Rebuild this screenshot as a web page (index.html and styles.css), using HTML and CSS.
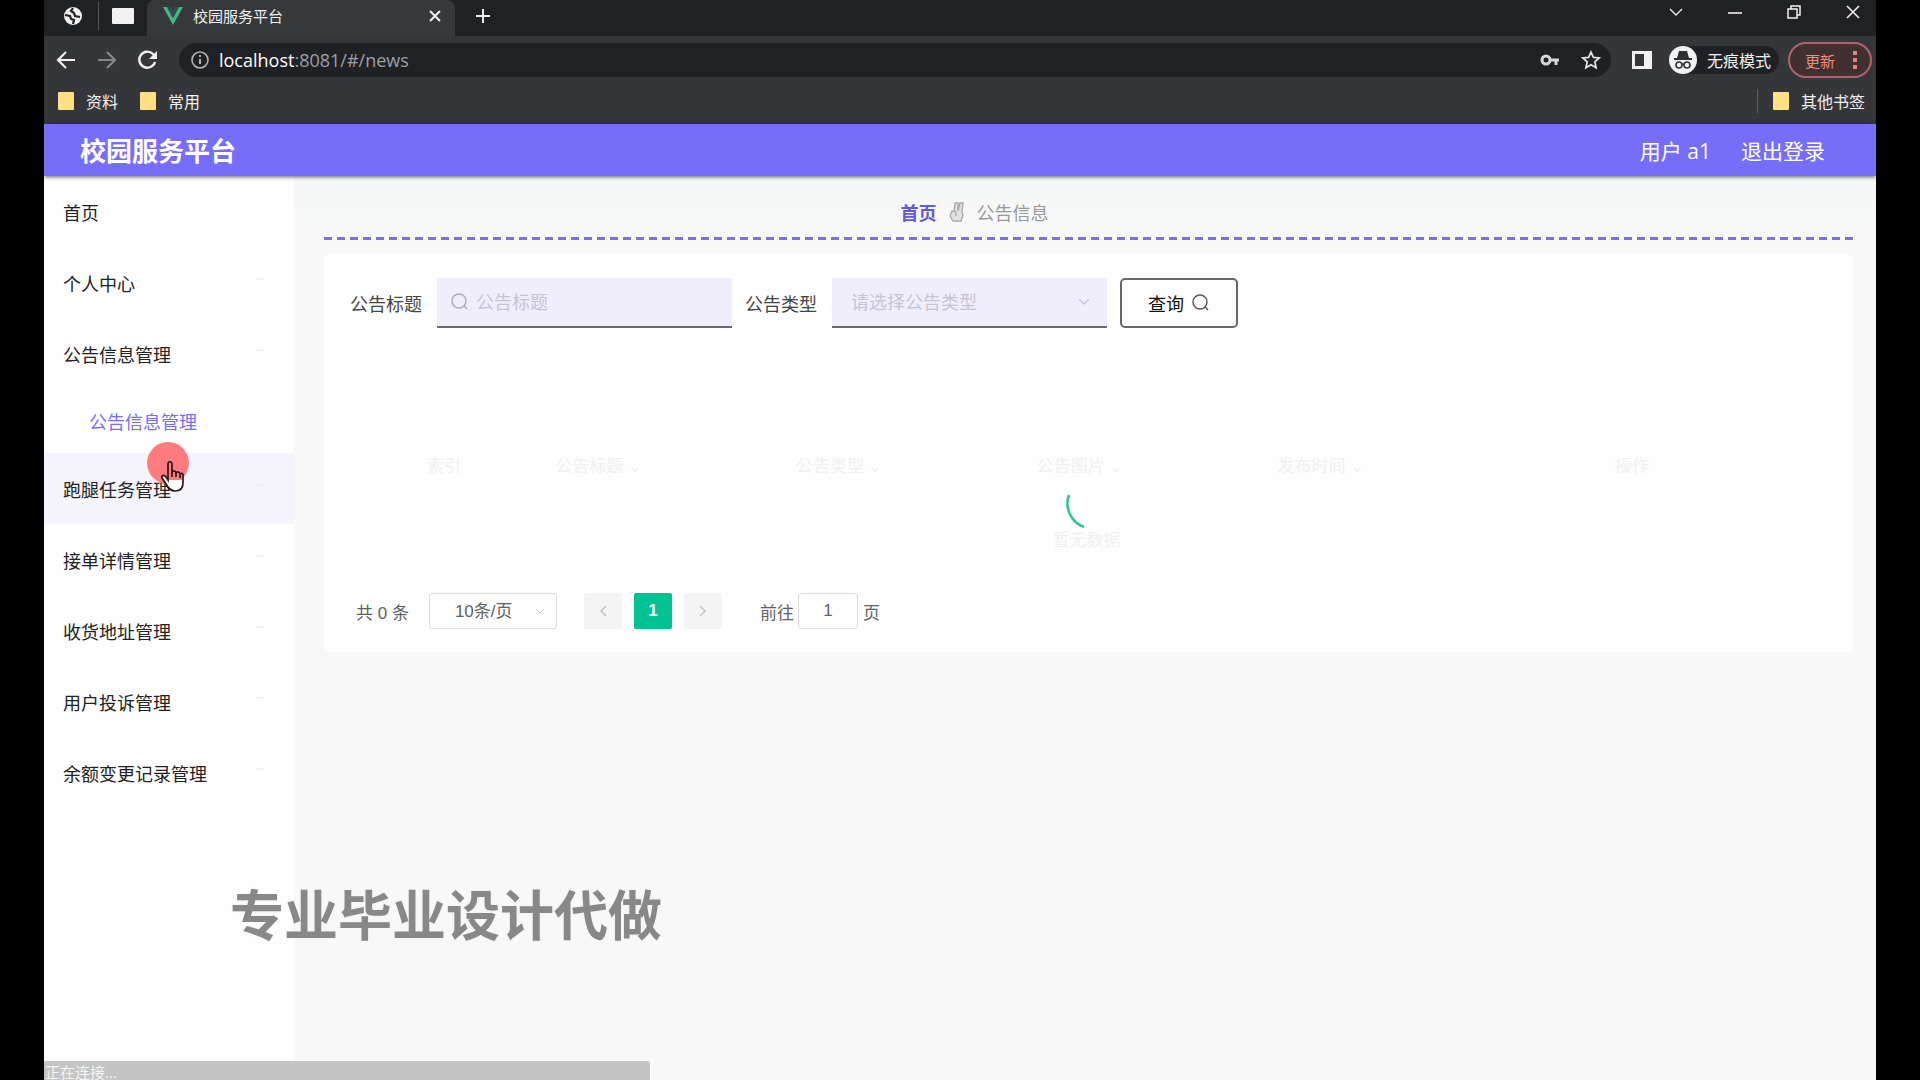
FILE: index.html
```html
<!DOCTYPE html>
<html lang="zh-CN">
<head>
  <meta charset="UTF-8">
  <meta name="viewport" content="width=device-width, initial-scale=1.0">
  <title>校园服务平台</title>
  <link rel="stylesheet" href="styles.css">
</head>
<body>
  <div class="screen">
    <!-- Browser frame -->
    <div class="browser">
      <div class="tab-strip">
        <div class="pinned">
          <svg width="20" height="20" viewBox="0 0 20 20"><circle cx="10" cy="10" r="9" fill="#f1f1f1"/><path d="M2 9l5 1 1 3 3 1-1 4M10 2L8 5l3 2 1 3 5 1" fill="none" stroke="#202124" stroke-width="2.200"/></svg>
        </div>
        <div class="pinned pinned-last">
          <svg width="22" height="16" viewBox="0 0 22 16"><rect width="22" height="16" rx="1" fill="#f1f1f1"/></svg>
        </div>
        <div class="tab">
          <svg width="20" height="18" viewBox="0 0 20 18"><path d="M0 0h4l6 11 6-11h4L10 18z" fill="#41b883"/><path d="M4 0h4l2 4 2-4h4l-6 11z" fill="#34495e"/></svg>
          <span class="tab-title">校园服务平台</span>
          <button class="chrome-btn" aria-label="关闭标签页"><svg width="12" height="12" viewBox="0 0 12 12"><path d="M1 1l10 10M11 1L1 11" stroke="#f1f1f1" stroke-width="2"/></svg></button>
        </div>
        <button class="chrome-btn new-tab" aria-label="新标签页"><svg width="16" height="16" viewBox="0 0 16 16"><path d="M8 1v14M1 8h14" stroke="#e8eaed" stroke-width="2"/></svg></button>
        <div class="window-controls">
          <button class="chrome-btn" aria-label="搜索标签页"><svg width="14" height="14" viewBox="0 0 14 14"><path d="M1 4l6 6 6-6" fill="none" stroke="#e8eaed" stroke-width="1.4"/></svg></button>
          <button class="chrome-btn" aria-label="最小化"><svg width="14" height="14" viewBox="0 0 14 14"><path d="M0 8h14" stroke="#f1f1f1" stroke-width="1.6"/></svg></button>
          <button class="chrome-btn" aria-label="还原"><svg width="14" height="14" viewBox="0 0 14 14"><path d="M1 4h9v9H1zM4 4V1h9v9h-3" fill="none" stroke="#f1f1f1" stroke-width="1.5"/></svg></button>
          <button class="chrome-btn" aria-label="关闭"><svg width="14" height="14" viewBox="0 0 14 14"><path d="M1 1l12 12M13 1L1 13" stroke="#f1f1f1" stroke-width="1.6"/></svg></button>
        </div>
      </div>

      <div class="toolbar">
        <button class="chrome-btn" aria-label="后退"><svg width="20" height="20" viewBox="0 0 20 20"><path d="M19 10H2M10 2l-8 8 8 8" fill="none" stroke="#f1f1f1" stroke-width="2.2"/></svg></button>
        <button class="chrome-btn" aria-label="前进"><svg width="20" height="20" viewBox="0 0 20 20"><path d="M1 10h17M10 2l8 8-8 8" fill="none" stroke="#85878a" stroke-width="2.2"/></svg></button>
        <button class="chrome-btn" aria-label="重新加载"><svg width="20" height="20" viewBox="0 0 20 20"><path d="M17 12a8 8 0 1 1-2-8l2 2" fill="none" stroke="#f1f1f1" stroke-width="2.4"/><path d="M19 1v8h-8z" fill="#f1f1f1"/></svg></button>
        <div class="address-bar">
          <svg width="18" height="18" viewBox="0 0 18 18"><circle cx="9" cy="9" r="8" fill="none" stroke="#b0b3b7" stroke-width="1.6"/><path d="M9 8v5M9 4v2" stroke="#b0b3b7" stroke-width="2"/></svg>
          <span class="url"><b>localhost</b>:8081/#/news</span>
          <svg width="20" height="14" viewBox="0 0 20 14"><circle cx="6" cy="7" r="4" fill="none" stroke="#d5d7da" stroke-width="3"/><path d="M10 7h9M16 7v5" stroke="#d5d7da" stroke-width="3"/></svg>
          <svg width="20" height="20" viewBox="0 0 20 20"><path d="M10 2l2.400 5.400 5.800.6-4.400 3.900 1.300 5.800L10 14.700l-5.100 3 1.300-5.800L1.800 8l5.800-.6z" fill="none" stroke="#e2e4e6" stroke-width="1.700"/></svg>
        </div>
        <svg width="20" height="18" viewBox="0 0 20 18"><path d="M1.500 1.500h17v15h-17z" fill="none" stroke="#f1f1f1" stroke-width="3"/><path d="M12 1h7v16h-7z" fill="#f1f1f1"/></svg>
        <div class="incognito">
          <svg width="28" height="28" viewBox="0 0 28 28"><circle cx="14" cy="14" r="14" fill="#f1f3f4"/><path d="M10 5h8l2 7H8zM5 12h18v2H5z" fill="#303134"/><g fill="none" stroke="#303134" stroke-width="1.600"><circle cx="10" cy="19" r="3"/><circle cx="18" cy="19" r="3"/><path d="M13 18h2"/></g></svg>
          <span>无痕模式</span>
        </div>
        <button class="update-btn">更新<svg width="4" height="18" viewBox="0 0 4 18"><path d="M0 0h4v4H0zM0 7h4v4H0zM0 14h4v4H0z" fill="#e5837f"/></svg></button>
      </div>

      <div class="bookmarks">
        <a href="#" class="bookmark"><i class="folder"></i>资料</a>
        <a href="#" class="bookmark"><i class="folder"></i>常用</a>
        <a href="#" class="bookmark bookmark-other"><i class="folder"></i>其他书签</a>
      </div>
    </div>

    <!-- App header -->
    <header class="header">
      <h1>校园服务平台</h1>
      <span>用户 a1</span>
      <a href="#">退出登录</a>
    </header>

    <div class="layout">
      <nav class="sidebar">
        <a href="#" class="menu-item">首页</a>
        <a href="#" class="menu-item has-arrow">个人中心</a>
        <a href="#" class="menu-item has-arrow">公告信息管理</a>
        <a href="#" class="submenu-item">公告信息管理</a>
        <a href="#" class="menu-item has-arrow hovered">跑腿任务管理</a>
        <a href="#" class="menu-item has-arrow">接单详情管理</a>
        <a href="#" class="menu-item has-arrow">收货地址管理</a>
        <a href="#" class="menu-item has-arrow">用户投诉管理</a>
        <a href="#" class="menu-item has-arrow">余额变更记录管理</a>
      </nav>

      <main class="main">
        <div class="breadcrumb">
          <a href="#">首页</a>
          <svg width="16" height="20" viewBox="0 0 16 20"><path d="M5 10L6 1h3v8M9 9l2-8h3l-1 9 1 3-2 6H4l-3-5 2-5 4 1v4" fill="#e2e2e2" stroke="#aaa" stroke-width="1.400"/></svg>
          <span>公告信息</span>
        </div>

        <section class="card">
          <form class="search-form">
            <label for="title">公告标题</label>
            <div class="title-field">
              <svg width="18" height="18" viewBox="0 0 18 18"><circle cx="8" cy="8" r="7" fill="none" stroke="#a9a9b2" stroke-width="1.400"/><path d="M13 13l3 3" stroke="#a9a9b2" stroke-width="1.400"/></svg>
              <input type="text" id="title" placeholder="公告标题">
            </div>
            <label for="type">公告类型</label>
            <div class="type-field">
              <select id="type"><option>请选择公告类型</option></select>
              <svg width="12" height="8" viewBox="0 0 12 8"><path d="M1 1l5 5 5-5" fill="none" stroke="#c9c7d6" stroke-width="1.400"/></svg>
            </div>
            <button type="button" class="query-btn">查询<svg width="18" height="18" viewBox="0 0 18 18"><circle cx="8" cy="8" r="7" fill="none" stroke="#555" stroke-width="1.400"/><path d="M13 13l3 3" stroke="#555" stroke-width="1.400"/></svg></button>
          </form>

          <div class="table-wrap">
            <table>
              <thead>
                <tr>
                  <th class="col-check"></th>
                  <th class="col-index">索引</th>
                  <th>公告标题 ⌄</th>
                  <th>公告类型 ⌄</th>
                  <th>公告图片 ⌄</th>
                  <th>发布时间 ⌄</th>
                  <th class="col-action">操作</th>
                </tr>
              </thead>
              <tbody>
                <tr><td colspan="7">暂无数据</td></tr>
              </tbody>
            </table>
            <svg class="spinner" width="52" height="52" viewBox="0 0 52 52"><path d="M3 16A25 25 0 0 0 18 48" fill="none" stroke="#2fc495" stroke-width="2.500"/></svg>
          </div>

          <div class="pagination">
            <span>共 0 条</span>
            <div class="page-size">
              <select aria-label="每页条数"><option>10条/页</option></select>
              <svg width="10" height="6" viewBox="0 0 10 6"><path d="M1 1l4 4 4-4" fill="none" stroke="#c8c8c8"/></svg>
            </div>
            <div class="pager">
              <button aria-label="上一页" disabled><svg width="8" height="12" viewBox="0 0 8 12"><path d="M7 1L2 6l5 5" fill="none" stroke="#c0c4cc" stroke-width="1.500"/></svg></button>
              <button class="active">1</button>
              <button aria-label="下一页" disabled><svg width="8" height="12" viewBox="0 0 8 12"><path d="M1 1l5 5-5 5" fill="none" stroke="#c0c4cc" stroke-width="1.500"/></svg></button>
            </div>
            <label for="jump">前往</label>
            <input type="text" id="jump" value="1">
            <span>页</span>
          </div>
        </section>
      </main>
    </div>

    <div class="watermark">专业毕业设计代做</div>
    <div class="status">正在连接...</div>
    <div class="click-dot"></div>
    <svg class="cursor" width="24" height="32" viewBox="0 0 24 32"><path d="M7 19V3c0-3 4-3 4 0v8c1-2 4-1 4 1 1-2 4-1 4 1 1-1 3-1 3 1v8c0 5-3 8-8 8-5 0-7-3-9-7l-4-6c-1-2 2-4 4-1z" fill="#fff"/><path d="M7 19V3c0-3 4-3 4 0v8c1-2 4-1 4 1 1-2 4-1 4 1 1-1 3-1 3 1v5H9z" fill="#ff7b7e"/><path d="M7 19V3c0-3 4-3 4 0v8c1-2 4-1 4 1 1-2 4-1 4 1 1-1 3-1 3 1v8c0 5-3 8-8 8-5 0-7-3-9-7l-4-6c-1-2 2-4 4-1zM11 10v6M15 12v4M19 13v4" fill="none" stroke="#2a1718" stroke-width="1.700"/></svg>
  </div>
</body>
</html>
```
FILE: styles.css
```css
:root {
  --primary: #766dfb;
  --green: #00c292;
  --chrome-dark: #202124;
  --chrome: #35363a;
  --field: #f1eefc;
  --ghost: #f1f0f2;
}

* {
  box-sizing: border-box;
  margin: 0;
  padding: 0;
}

body {
  background: #000;
  font-family: "Open Sans", "Noto Sans CJK SC", sans-serif;
  font-size: 18px;
  color: #222;
  height: 100vh;
  padding: 0 44px;
  overflow: hidden;
}

a {
  color: inherit;
  text-decoration: none;
}

svg {
  display: block;
  flex-shrink: 0;
}

button,
input,
select {
  font: inherit;
  color: inherit;
  border: none;
  background: none;
  outline: none;
}

select {
  appearance: none;
}

.screen {
  position: relative;
  display: flex;
  flex-direction: column;
  height: 100%;
  background: #f8f8f8;
  overflow: hidden;
}

/* Browser frame */
.browser {
  background: var(--chrome);
  color: #f1f1f1;
  font-size: 16px;
}

.chrome-btn {
  display: flex;
}

.tab-strip {
  display: flex;
  align-items: center;
  height: 36px;
  padding-bottom: 4px;
  background: var(--chrome-dark);
}

.pinned {
  display: flex;
  justify-content: center;
  width: 54px;
  padding-left: 4px;
}

.pinned-last {
  width: 49px;
  border-left: 1px solid #55565a;
  padding: 6px 0;
}

.tab {
  display: flex;
  align-items: center;
  width: 308px;
  height: 36px;
  margin-bottom: -4px;
  padding: 0 14px 5px 16px;
  background: #35393b;
  border-radius: 8px 8px 0 0;
}

.tab-title {
  flex: 1;
  padding-left: 10px;
  font-size: 15px;
}

.new-tab {
  margin-left: 20px;
}

.window-controls {
  display: flex;
  gap: 45px;
  margin: -8px 16px 0 auto;
}

.toolbar {
  display: flex;
  align-items: center;
  gap: 21px;
  height: 48px;
  padding: 0 4px 0 12px;
}

.address-bar {
  display: flex;
  align-items: center;
  gap: 21px;
  flex: 1;
  height: 34px;
  padding: 0 10px 0 12px;
  background: var(--chrome-dark);
  border-radius: 17px;
}

.url {
  flex: 1;
  margin-left: -11px;
  font-size: 18px;
  color: #9aa0a6;
}

.url b {
  font-weight: 400;
  color: #fff;
}

.incognito {
  display: flex;
  align-items: center;
  gap: 10px;
  height: 28px;
  margin-left: -4px;
  padding-right: 8px;
  background: var(--chrome-dark);
  border-radius: 14px;
}

.update-btn {
  display: flex;
  align-items: center;
  gap: 18px;
  height: 36px;
  margin-left: -12px;
  padding: 0 13px 0 15px;
  border: 2px solid #b0626c;
  border-radius: 18px;
  background: #40302f;
  color: #f28b82;
  font-size: 15px;
}

.bookmarks {
  display: flex;
  align-items: center;
  gap: 22px;
  height: 40px;
  padding: 0 11px 6px 14px;
}

.bookmark {
  display: flex;
  align-items: center;
  gap: 12px;
}

.bookmark-other {
  margin-left: auto;
  padding-left: 15px;
  border-left: 1px solid #5f6063;
}

.folder {
  width: 16px;
  height: 18px;
  background: #ffe083;
  border-radius: 1px;
}

/* App header */
.header {
  position: relative;
  display: flex;
  align-items: center;
  gap: 30px;
  height: 52px;
  flex-shrink: 0;
  padding: 0 51px 0 36px;
  background: var(--primary);
  box-shadow: 0 1px 4px rgba(0, 0, 0, 0.6);
  color: #fff;
  font-size: 21px;
}

.header h1 {
  flex: 1;
  font-size: 26px;
}

/* Layout */
.layout {
  display: flex;
  flex: 1;
}

.sidebar {
  width: 250px;
  flex-shrink: 0;
  background: #fefefe;
}

.menu-item,
.submenu-item {
  display: flex;
  align-items: center;
  height: 71px;
  padding: 0 30px 0 19px;
}

.submenu-item {
  height: 64px;
  padding-left: 45px;
  color: var(--primary);
}

.has-arrow::after {
  content: "";
  width: 8px;
  height: 2px;
  margin: -8px 0 0 auto;
  background: #f4f3fb;
}

.hovered {
  background: #f5f4fa;
}

.hovered::after {
  background: #f0eef8;
}

.main {
  flex: 1;
  padding: 0 23px 0 30px;
  background: linear-gradient(#f5f8f7, #f8f8f9 60px, #f8f8f8);
}

.breadcrumb {
  display: flex;
  justify-content: center;
  align-items: center;
  gap: 12px;
  height: 64px;
  padding: 8px 228px 0 0;
  color: #999;
  background: repeating-linear-gradient(90deg, #7c6fe0 0 8px, transparent 8px 13px) 0 100% / 100% 3px no-repeat;
}

.breadcrumb a {
  color: #6359dc;
  font-weight: 700;
}

.card {
  margin-top: 14px;
  padding: 24px 30px 23px 26px;
  background: #fefefe;
  border-radius: 6px;
}

.search-form {
  display: flex;
  align-items: center;
  height: 50px;
  color: #444;
}

.title-field,
.type-field {
  display: flex;
  align-items: center;
  height: 50px;
  margin: 0 13px 0 15px;
  background: var(--field);
  border-bottom: 2px solid #696874;
}

.title-field {
  width: 295px;
  padding-left: 14px;
  gap: 7px;
}

.title-field input {
  flex: 1;
  min-width: 0;
}

.title-field input::placeholder {
  color: #c6c4d0;
}

.type-field {
  width: 275px;
  padding: 0 17px 0 19px;
}

.type-field select {
  flex: 1;
  color: #c6c4d0;
}

.query-btn {
  display: flex;
  align-items: center;
  justify-content: center;
  gap: 8px;
  width: 118px;
  height: 50px;
  border: 2px solid #66686c;
  border-radius: 5px;
  color: #111;
}

/* Table */
.table-wrap {
  position: relative;
  height: 265px;
  padding-top: 106px;
}

table {
  width: 100%;
  border-collapse: collapse;
  table-layout: fixed;
  color: var(--ghost);
  font-size: 17px;
}

th {
  height: 60px;
  font-weight: 400;
}

td {
  height: 88px;
  text-align: center;
}

.col-check {
  width: 60px;
}

.col-index {
  width: 68px;
}

.col-action {
  width: 382px;
}

.spinner {
  position: absolute;
  top: 151px;
  left: 716px;
}

/* Pagination */
.pagination {
  display: flex;
  align-items: center;
  height: 36px;
  padding-left: 6px;
  font-family: "Liberation Sans", "Noto Sans CJK SC", sans-serif;
  font-size: 17px;
  color: #606266;
}

.page-size {
  display: flex;
  align-items: center;
  width: 128px;
  height: 36px;
  margin: 0 27px 0 20px;
  padding: 0 11px 0 25px;
  border: 1px solid #dcdcdc;
  border-radius: 3px;
}

.page-size select {
  flex: 1;
}

.pager {
  display: flex;
  gap: 12px;
  margin-right: 38px;
}

.pager button {
  display: flex;
  align-items: center;
  justify-content: center;
  width: 38px;
  height: 36px;
  background: #f4f4f5;
  border-radius: 2px;
}

.pager .active {
  background: var(--green);
  color: #fff;
  font-weight: 700;
}

.pagination input {
  width: 60px;
  height: 36px;
  margin: 0 5px 0 4px;
  border: 1px solid #dcdcdc;
  border-radius: 3px;
  text-align: center;
}

/* Overlays */
.watermark {
  position: absolute;
  left: 186px;
  bottom: 125px;
  font-size: 54px;
  font-weight: 700;
  line-height: 80px;
  color: #888;
  text-shadow: 0 0 3px #fff, 0 0 2px #ddd;
}

.status {
  position: absolute;
  left: 0;
  bottom: 0;
  width: 606px;
  height: 19px;
  padding-left: 1px;
  background: #c5c4c5;
  border-radius: 0 3px 0 0;
  color: #f4f4f4;
  font-size: 15px;
  line-height: 22px;
}

.click-dot {
  position: absolute;
  left: 103px;
  top: 442px;
  width: 42px;
  height: 42px;
  border-radius: 50%;
  background: #ff7b7e;
}

.cursor {
  position: absolute;
  left: 117px;
  top: 461px;
}
```
